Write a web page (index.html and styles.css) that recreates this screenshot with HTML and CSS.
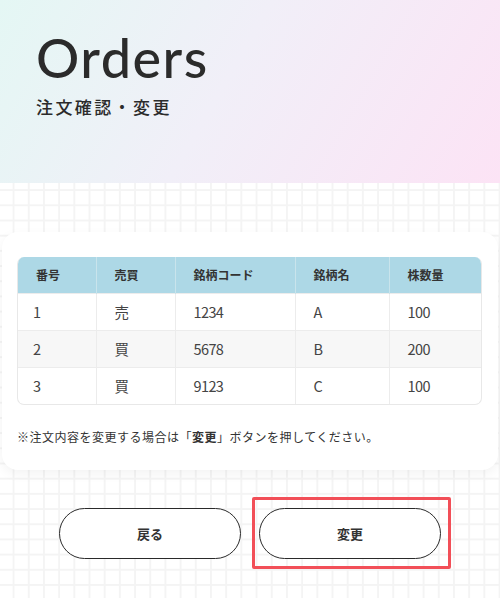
FILE: index.html
```html
<!DOCTYPE html>
<html lang="ja">
<head>
    <meta charset="UTF-8">
    <meta name="viewport" content="width=device-width, initial-scale=1.0">
    <title>Orders</title>
    <link rel="stylesheet" href="styles.css">
</head>
<body>
    <div class="hero">
        <h1 class="hero-title">Orders</h1>
        <p class="hero-sub">注文確認・変更</p>
    </div>

    <div class="main">
        <div class="card">
            <div class="table-wrap">
                <table class="orders">
                    <colgroup>
                        <col class="c1"><col class="c2"><col class="c3"><col class="c4"><col class="c5">
                    </colgroup>
                    <thead>
                        <tr>
                            <th>番号</th>
                            <th>売買</th>
                            <th>銘柄コード</th>
                            <th>銘柄名</th>
                            <th>株数量</th>
                        </tr>
                    </thead>
                    <tbody>
                        <tr>
                            <td>1</td><td>売</td><td>1234</td><td>A</td><td>100</td>
                        </tr>
                        <tr>
                            <td>2</td><td>買</td><td>5678</td><td>B</td><td>200</td>
                        </tr>
                        <tr>
                            <td>3</td><td>買</td><td>9123</td><td>C</td><td>100</td>
                        </tr>
                    </tbody>
                </table>
            </div>
            <p class="note">※注文内容を変更する場合は「<b>変更</b>」ボタンを押してください。</p>
        </div>

        <div class="btns">
            <button class="btn">戻る</button>
            <button class="btn btn-mark">変更</button>
        </div>
    </div>
</body>
</html>
```

FILE: styles.css
```css
*{margin: 0;padding: 0;box-sizing: border-box;}
body{
    font-family: "Noto Sans CJK JP", "Noto Sans", sans-serif;
    color: #333;
    background-color: #fff;
    background-image:
        linear-gradient(to right, #f4f4f4 1.5px, transparent 1.5px),
        linear-gradient(to bottom, #f4f4f4 1.5px, transparent 1.5px);
    background-size: 15.2px 15.2px;
    background-position: 12.6px 6.9px;
    min-height: 598px;
}

/* ヘッダー */
.hero{
    height: 183px;
    padding: 28px 0 0 36px;
    background: linear-gradient(120deg, #e4f7f4 0%, #f1eff8 45%, #fce3f5 100%);
}
.hero-title{
    font-family: Lato, "Noto Sans", sans-serif;
    font-weight: 500;
    font-size: 54px;
    line-height: 60px;
    letter-spacing: 1.5px;
    color: #2b2b2b;
}
.hero-sub{
    margin-top: 7px;
    font-size: 17px;
    font-weight: 500;
    letter-spacing: 2.4px;
    line-height: 24px;
    color: #2b2b2b;
}

/* カード */
.main{padding-top: 49px;}
.card{
    margin: 0 2px;
    background: #fff;
    border-radius: 16px;
    padding: 25px 16px 0 15px;
    height: 238px;
    box-shadow: 0 4px 12px rgba(0,0,0,0.05);
}
.table-wrap{
    border: 1px solid #e8e8e8;
    border-top: none;
    border-radius: 7px;
    overflow: hidden;
}
.orders{
    width: 100%;
    border-collapse: collapse;
    table-layout: fixed;
}
.c1{width: 78px;}
.c2{width: 79px;}
.c3{width: 120px;}
.c4{width: 94px;}
.c5{width: auto;}
.orders th{
    background: #add8e6;
    height: 36px;
    text-align: left;
    padding-left: 18px;
    font-size: 12px;
    font-weight: 700;
    border-left: 1px solid #c9e4ec;
}
.orders th:first-child,.orders td:first-child{border-left: none;}
.orders td{
    height: 37px;
    padding-left: 18px;
    font-size: 14.5px;
    letter-spacing: -0.6px;
    color: #444;
    border-left: 1px solid #ececec;
    border-top: 1px solid #ececec;
}
.orders td:first-child{padding-left: 15px;}
.orders tbody tr:nth-child(2) td{background: #f7f7f7;}

.note{
    margin-top: 23px;
    font-size: 12px;
    letter-spacing: 0.5px;
    color: #333;
}
.note b{font-weight: 700;}

/* ボタン */
.btns{
    display: flex;
    justify-content: center;
    gap: 18px;
    margin-top: 38px;
}
.btn{
    width: 182px;
    height: 51px;
    border: 1.5px solid #2a2a2a;
    border-radius: 26px;
    background: #fff;
    font-family: "Noto Sans CJK JP", sans-serif;
    font-size: 13px;
    font-weight: 700;
    color: #333;
}
.btn-mark{position: relative;}
.btn-mark::after{
    content: "";
    position: absolute;
    top: -12px;
    bottom: -11px;
    left: -8px;
    right: -11px;
    border: 3px solid #f24f58;
    border-radius: 2px;
}
```
